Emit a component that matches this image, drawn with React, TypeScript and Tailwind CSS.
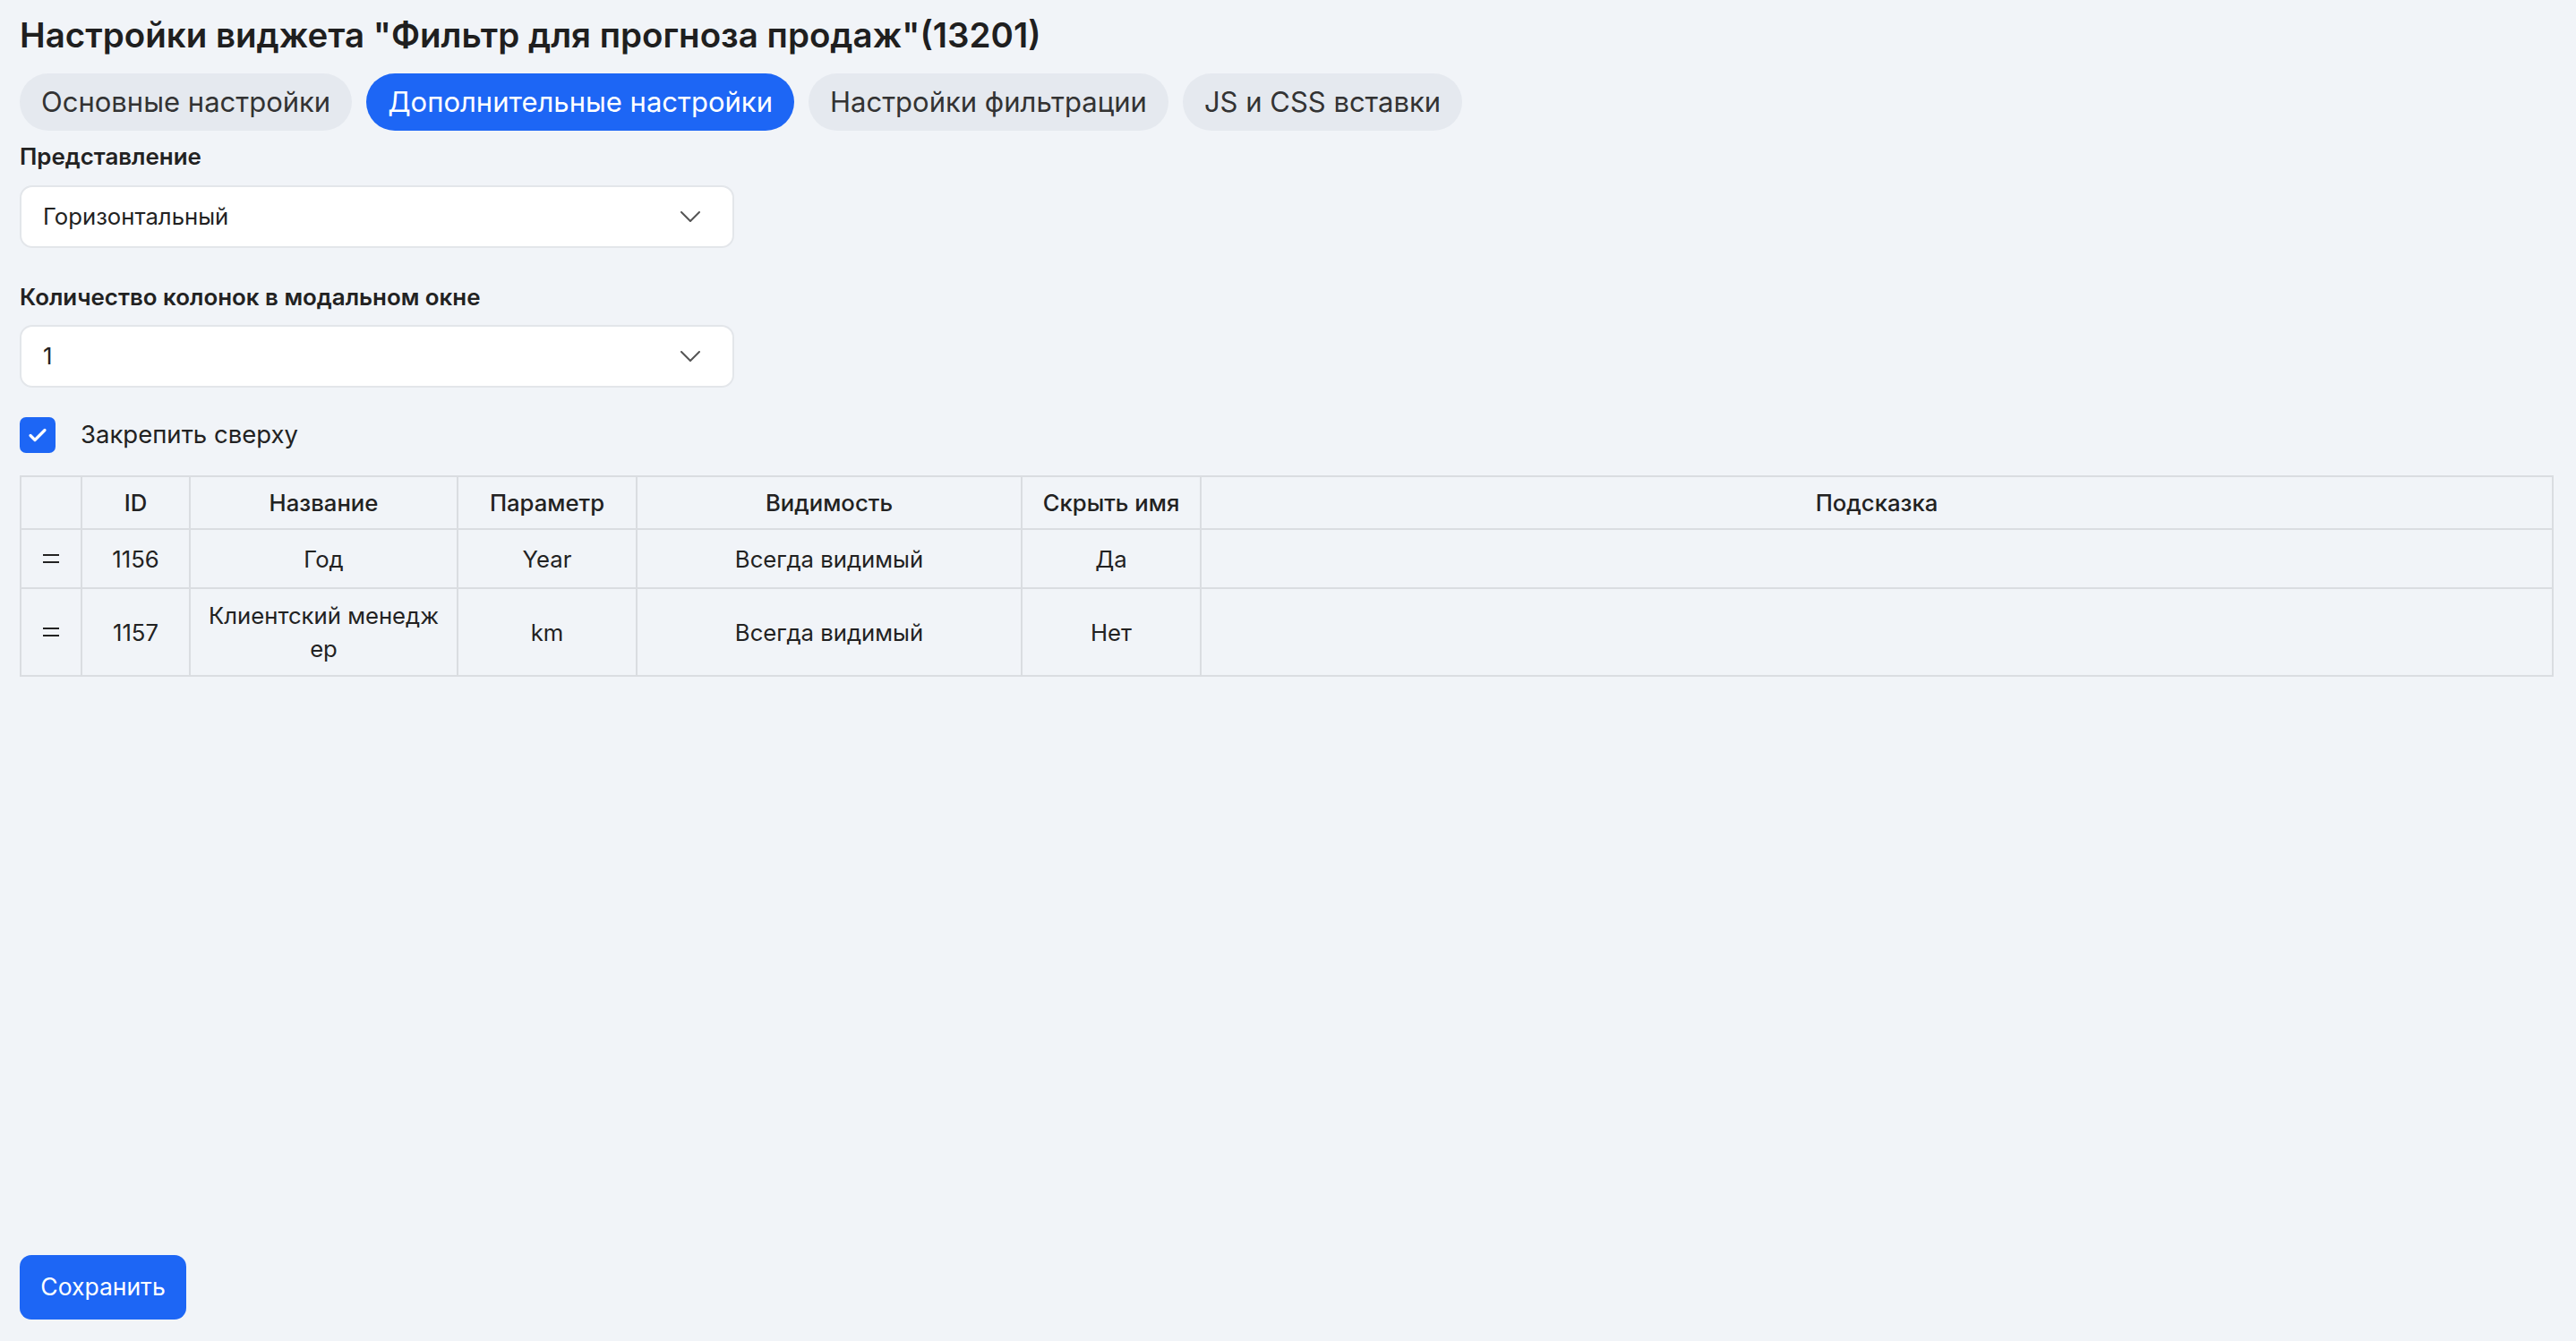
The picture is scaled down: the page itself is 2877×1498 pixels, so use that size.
import React, { useState } from 'react';

const tabs = [
	'Основные настройки',
	'Дополнительные настройки',
	'Настройки фильтрации',
	'JS и CSS вставки',
];

const rows = [
	{ id: 1156, name: ['Год'], param: 'Year', vis: 'Всегда видимый', hide: 'Да', h: 'h-[66px]' },
	{ id: 1157, name: ['Клиентский менедж', 'ер'], param: 'km', vis: 'Всегда видимый', hide: 'Нет', h: 'h-[98px]' },
];

function Chevron() {
	return (
		<svg width="22" height="12" viewBox="0 0 22 12" fill="none">
			<path d="M1 1l10 10L21 1" stroke="#555" strokeWidth="2" strokeLinecap="round" strokeLinejoin="round" />
		</svg>
	);
}

function Select({ value }: { value: string }) {
	return (
		<div className="w-[798px] h-[70px] bg-white border-2 border-[#e3e6ea] rounded-[14px] flex items-center justify-between pl-[24px] pr-[36px] text-[25.7px]">
			<span>{value}</span>
			<Chevron />
		</div>
	);
}

function Handle() {
	return (
		<div className="flex flex-col items-center gap-[6px]">
			<div className="w-[18px] h-[2px] bg-[#222]"></div>
			<div className="w-[18px] h-[2px] bg-[#222]"></div>
		</div>
	);
}

export default function App() {
	const [active, setActive] = useState(1);
	const [pinned, setPinned] = useState(true);

	return (
		<div className="min-h-screen bg-[#f1f4f8] flex flex-col pl-[22px] pr-[25px] pt-[17px] pb-[24px] text-[#222] font-['Inter','Noto_Sans',sans-serif]">
			<h1 className="text-[38.5px] leading-[44px] font-semibold text-[#1f1f1f]">
				Настройки виджета "Фильтр для прогноза продаж"(13201)
			</h1>

			<div className="flex flex-row gap-[16px] mt-[21px]">
				{tabs.map((t, i) => (
					<button
						key={t}
						onClick={() => setActive(i)}
						className={`h-[64px] px-[24px] rounded-full text-[31px] flex items-center ${
							active === i ? 'bg-[#1d66f5] text-white' : 'bg-[#e5e9ef] text-[#333]'
						}`}
					>
						{t}
					</button>
				))}
			</div>

			<div className="mt-[11px] text-[25.9px] leading-[36px] font-semibold">Представление</div>
			<div className="mt-[14px]">
				<Select value="Горизонтальный" />
			</div>

			<div className="mt-[37px] text-[25.9px] leading-[36px] font-semibold">Количество колонок в модальном окне</div>
			<div className="mt-[13px]">
				<Select value="1" />
			</div>

			<label className="mt-[32px] flex flex-row items-center gap-[28px] cursor-pointer" onClick={() => setPinned(!pinned)}>
				<div className={`w-[40px] h-[40px] rounded-[7px] flex items-center justify-center ${pinned ? 'bg-[#1d66f5]' : 'bg-white border-2 border-[#ccc]'}`}>
					{pinned && (
						<svg width="24" height="24" viewBox="0 0 24 24" fill="none">
							<path d="M4 12.5l5 5L20 6.5" stroke="white" strokeWidth="3.2" strokeLinecap="round" strokeLinejoin="round" />
						</svg>
					)}
				</div>
				<span className="text-[27.5px]">Закрепить сверху</span>
			</label>

			<table className="mt-[25px] w-full table-fixed border-collapse border-2 border-[#dadde1] text-[25.7px] leading-[37px]">
				<colgroup>
					<col className="w-[68px]" />
					<col className="w-[121px]" />
					<col className="w-[299px]" />
					<col className="w-[200px]" />
					<col className="w-[430px]" />
					<col className="w-[200px]" />
					<col />
				</colgroup>
				<thead>
					<tr className="h-[59px]">
						<th className="border-2 border-[#dadde1] font-medium"></th>
						<th className="border-2 border-[#dadde1] font-medium">ID</th>
						<th className="border-2 border-[#dadde1] font-medium">Название</th>
						<th className="border-2 border-[#dadde1] font-medium">Параметр</th>
						<th className="border-2 border-[#dadde1] font-medium">Видимость</th>
						<th className="border-2 border-[#dadde1] font-medium">Скрыть имя</th>
						<th className="border-2 border-[#dadde1] font-medium">Подсказка</th>
					</tr>
				</thead>
				<tbody>
					{rows.map((r) => (
						<tr key={r.id} className={r.h}>
							<td className="border-2 border-[#dadde1]">
								<Handle />
							</td>
							<td className="border-2 border-[#dadde1] text-center">{r.id}</td>
							<td className="border-2 border-[#dadde1] text-center">
								{r.name.map((n) => (
									<div key={n}>{n}</div>
								))}
							</td>
							<td className="border-2 border-[#dadde1] text-center">{r.param}</td>
							<td className="border-2 border-[#dadde1] text-center">{r.vis}</td>
							<td className="border-2 border-[#dadde1] text-center">{r.hide}</td>
							<td className="border-2 border-[#dadde1]"></td>
						</tr>
					))}
				</tbody>
			</table>

			<div className="mt-auto">
				<button className="w-[186px] h-[72px] rounded-[13px] bg-[#1d66f5] text-white text-[26.5px]">Сохранить</button>
			</div>
		</div>
	);
}
